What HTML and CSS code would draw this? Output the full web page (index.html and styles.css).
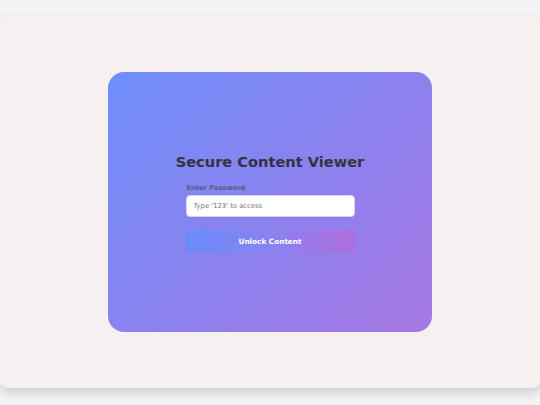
FILE: index.html
```html
<!DOCTYPE html>
<html lang="en">
<head>
<meta charset="utf-8">
<title>Secure Content Viewer</title>
<link rel="stylesheet" href="styles.css">
</head>
<body>
<div class="panel">
  <div class="card">
    <h1 class="title">Secure Content Viewer</h1>
    <form class="form">
      <label class="label" for="pw">Enter Password</label>
      <input class="input" id="pw" type="password" placeholder="Type '123' to access">
      <button class="button" type="button">Unlock Content</button>
    </form>
  </div>
</div>
</body>
</html>
```
FILE: styles.css
```css
html, body {
  margin: 0;
  padding: 0;
}
body {
  background: #f4f4f4;
  font-family: "DejaVu Sans", Verdana, sans-serif;
  width: 540px;
  height: 405px;
  overflow: hidden;
}
.panel {
  margin-top: 16px;
  height: 372px;
  width: 540px;
  background: #f6f0f0;
  border-radius: 8px;
  box-shadow: 0 5px 12px rgba(0, 0, 0, 0.16);
  display: flex;
  align-items: center;
  justify-content: center;
}
.card {
  width: 324px;
  height: 260px;
  border-radius: 16px;
  background: linear-gradient(135deg, #6e8efb, #a777e3);
  display: flex;
  flex-direction: column;
  align-items: center;
  justify-content: center;
}
.title {
  margin: 0 0 12px 0;
  font-size: 14.6px;
  line-height: 19px;
  font-weight: bold;
  color: #33333d;
}
.form {
  width: 169px;
  display: flex;
  flex-direction: column;
}
.label {
  font-size: 6.7px;
  line-height: 10px;
  font-weight: bold;
  color: #5a5a80;
  margin: 0 0 2px 1px;
}
.input {
  box-sizing: border-box;
  height: 22px;
  width: 100%;
  margin: 0;
  border: 1px solid #d8d4ea;
  border-radius: 4px;
  background: #fff;
  padding: 0 7px;
  font-family: "DejaVu Sans", Verdana, sans-serif;
  font-size: 6.8px;
  color: #333;
  outline: none;
}
.input::placeholder {
  color: #777;
}
.button {
  margin-top: 13px;
  height: 22px;
  width: 100%;
  border: none;
  border-radius: 4px;
  background: linear-gradient(90deg, rgba(100, 140, 252, 0.8), rgba(125, 135, 245, 0.3) 50%, rgba(180, 105, 220, 0.8));
  color: #fff;
  font-family: "DejaVu Sans", Verdana, sans-serif;
  font-size: 7.3px;
  font-weight: bold;
  padding: 0;
}
```
